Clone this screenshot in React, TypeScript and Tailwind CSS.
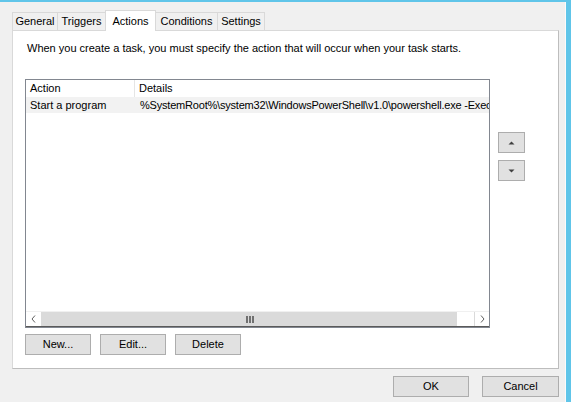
import React from "react";

const tabs = [
  { label: "General", w: "w-[46px]" },
  { label: "Triggers", w: "w-[49px]" },
  { label: "Actions", w: "w-[51px]", active: true },
  { label: "Conditions", w: "w-[63px]" },
  { label: "Settings", w: "w-[48px]" },
];

function Btn({ children, className = "" }: { children: React.ReactNode; className?: string }) {
  return (
    <button
      className={
        "h-[21px] bg-[#e1e1e1] border border-[#adadad] text-[11px] leading-none text-black flex items-center justify-center " +
        className
      }
    >
      {children}
    </button>
  );
}

function Triangle({ up }: { up?: boolean }) {
  return (
    <svg width="7" height="4" viewBox="0 0 7 4">
      {up ? <path d="M0.5 3.5 L3.5 0.5 L6.5 3.5 Z" fill="#404040" /> : <path d="M0.5 0.5 L3.5 3.5 L6.5 0.5 Z" fill="#404040" />}
    </svg>
  );
}

export default function App() {
  return (
    <div className="w-[571px] h-[402px] bg-[#f0f0f0] border-t-2 border-r-[5px] border-[#60c5e9] overflow-hidden font-['Segoe_UI','Liberation_Sans',sans-serif] text-[11px] text-black">
      <div className="h-full border-r border-[#fbfbfb] pl-3 pt-2 flex flex-col">
        {/* tab strip */}
        <div className="flex items-end h-[20px]">
          {tabs.map((t) => (
            <div
              key={t.label}
              className={
                t.w +
                " -mr-px flex items-center justify-center border border-b-0 border-[#d9d9d9] leading-none " +
                (t.active ? "h-[21px] bg-white relative z-10 -mb-px" : "h-[18px] bg-[#f0f0f0]")
              }
            >
              {t.label}
            </div>
          ))}
        </div>

        {/* tab page */}
        <div className="w-[547px] h-[339px] bg-white border border-[#d9d9d9] border-r-[#bdbdbd] border-b-[#bdbdbd] pl-[12px] pt-[10px]">
          <p className="ml-[2px] leading-[14px]">
            When you create a task, you must specify the action that will occur when your task starts.
          </p>

          <div className="flex mt-[24px]">
            <div className="w-[465px] h-[249px] border border-[#828790] flex flex-col overflow-hidden">
              <div className="flex h-[17px] items-center">
                <div className="w-[109px] pl-[4px] h-full flex items-center border-r border-[#e5e5e5]">Action</div>
                <div className="pl-[4px]">Details</div>
              </div>
              <div className="flex h-[16px] items-center bg-[#f2f2f2] whitespace-nowrap">
                <div className="w-[109px] pl-[4px] shrink-0">Start a program</div>
                <div className="pl-[5px] tracking-[-0.2px]">%SystemRoot%\system32\WindowsPowerShell\v1.0\powershell.exe -Exec</div>
              </div>
              <div className="flex-1" />
              {/* horizontal scrollbar */}
              <div className="h-[16px] flex border-t border-[#f0f0f0] border-b border-b-[#5a5a5a]">
                <div className="w-[16px] flex items-center justify-center bg-white border-r border-[#dadada]">
                  <svg width="5" height="8" viewBox="0 0 5 8">
                    <path d="M4 0.5 L1 4 L4 7.5" stroke="#606060" fill="none" />
                  </svg>
                </div>
                <div className="w-[415px] bg-[#dadada] flex items-center justify-center gap-[1px]">
                  <span className="w-[2px] h-[7px] bg-[#707070]" />
                  <span className="w-[2px] h-[7px] bg-[#707070]" />
                  <span className="w-[2px] h-[7px] bg-[#707070]" />
                </div>
                <div className="flex-1 bg-white" />
                <div className="w-[15px] border-l border-[#dadada] flex items-center justify-center bg-white">
                  <svg width="5" height="8" viewBox="0 0 5 8">
                    <path d="M1 0.5 L4 4 L1 7.5" stroke="#606060" fill="none" />
                  </svg>
                </div>
              </div>
            </div>

            <div className="ml-[8px] mt-[53px] flex flex-col gap-[7px]">
              <Btn className="w-[27px] h-[19px]">
                <Triangle up />
              </Btn>
              <Btn className="w-[27px] h-[19px]">
                <Triangle />
              </Btn>
            </div>
          </div>

          <div className="flex mt-[6px] gap-[9px]">
            <Btn className="w-[66px] border-[#0078d7]">New...</Btn>
            <Btn className="w-[66px]">Edit...</Btn>
            <Btn className="w-[66px]">Delete</Btn>
          </div>
        </div>

        {/* dialog buttons */}
        <div className="flex justify-end gap-[13px] mt-[7px] w-[547px]">
          <Btn className="w-[76px]">OK</Btn>
          <Btn className="w-[77px]">Cancel</Btn>
        </div>
      </div>
    </div>
  );
}
